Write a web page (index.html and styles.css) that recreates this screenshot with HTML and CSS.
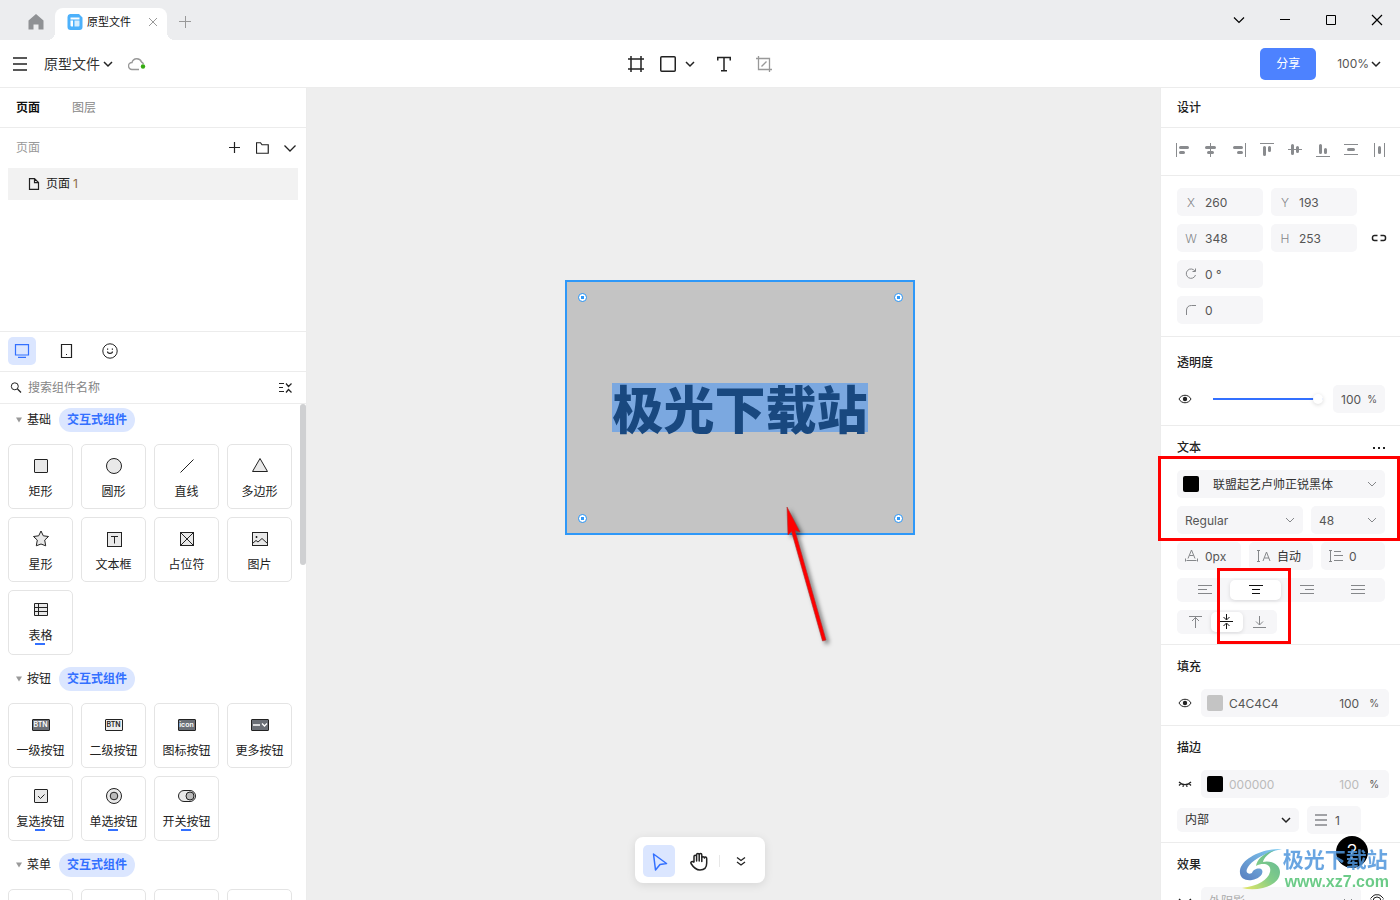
FILE: index.html
```html
<!DOCTYPE html>
<html lang="zh-CN">
<head>
<meta charset="utf-8">
<title>原型文件</title>
<link rel="stylesheet" href="styles.css">
</head>
<body>
<svg class="defs" aria-hidden="true">
  <symbol id="chev" viewBox="0 0 10 10"><path d="M1 3l4 4 4-4"/></symbol>
  <symbol id="tri" viewBox="0 0 8 6"><path d="M1 0.500h6L4 5.500z" fill="#999" stroke="none"/></symbol>
  <symbol id="eye" viewBox="0 0 14 10"><path d="M1 5c2.500-5 9.500-5 12 0-2.500 5-9.500 5-12 0z"/><circle cx="7" cy="5" r="2.200" fill="#222" stroke="none"/></symbol>
  <symbol id="closed" viewBox="0 0 14 10"><path d="M1 3c3 3.400 9 3.400 12 0M3 4.500L1 6.500M5.500 5.500L5 8M8.500 5.500L9 8M11 4.500L13 6.500" stroke-width="1.200"/></symbol>
</svg>
<div class="app">
  <header class="titlebar">
    <button class="home" aria-label="主页"><svg width="16" height="16" viewBox="0 0 16 16"><path d="M8 0l7.500 6.500V15.500h-5V10.500h-5v5h-5V6.500z" fill="#8f9194"/></svg></button>
    <div class="tab">
      <svg width="16" height="16" viewBox="0 0 16 16"><path d="M3 0h9l3.500 3.500V13a3 3 0 0 1-3 3H3.500a3 3 0 0 1-3-3V3A3 3 0 0 1 3 0z" fill="#4db1fb"/><path d="M3.500 3.500h9v2h-9z" fill="#fff"/><path d="M3.500 6.500h2.500v6H4.500a1 1 0 0 1-1-1z" fill="#fff"/><path d="M7.500 6.500h5v5a1 1 0 0 1-1 1h-4z" fill="#d5edff"/></svg>
      <span class="tab-name">原型文件</span>
      <button aria-label="关闭标签"><svg class="line pale" width="10" height="10" viewBox="0 0 10 10"><path d="M1 1l8 8M9 1L1 9"/></svg></button>
    </div>
    <button class="new-tab" aria-label="新建标签"><svg class="line pale" width="12" height="12" viewBox="0 0 12 12"><path d="M0 5.500h12M6.500 0v12"/></svg></button>
    <div class="window-buttons">
      <button aria-label="更多"><svg class="line" width="12" height="12" viewBox="0 0 12 12"><path d="M1 3.500l5 5 5-5" stroke-width="1.200"/></svg></button>
      <button aria-label="最小化"><svg class="line" width="12" height="12" viewBox="0 0 12 12"><path d="M1 5.500h10"/></svg></button>
      <button aria-label="最大化"><svg class="line" width="12" height="12" viewBox="0 0 12 12"><path d="M1.500 1.500h9v9h-9z"/></svg></button>
      <button aria-label="关闭"><svg class="line" width="12" height="12" viewBox="0 0 12 12"><path d="M1 1l10 10M11 1L1 11" stroke-width="1.200"/></svg></button>
    </div>
  </header>

  <div class="toolbar">
    <div class="bar-left">
      <button aria-label="菜单"><svg class="line thick" width="14" height="14" viewBox="0 0 14 14"><path d="M0 1h14M0 7h14M0 13h14"/></svg></button>
      <button class="file-name">原型文件<svg class="line thick" width="10" height="10"><use href="#chev"/></svg></button>
      <svg class="line cloud" width="18" height="14" viewBox="0 0 18 14"><path d="M11 12.500H4a3.500 3.500 0 0 1 0-7 5 5 0 0 1 9.500-.5 4 4 0 0 1 2 2" stroke="#999" stroke-width="1.400"/><circle cx="15" cy="9.500" r="2.200" fill="#36ab12" stroke="none"/></svg>
    </div>
    <div class="bar-mid">
      <button aria-label="画板"><svg class="line thick" width="16" height="16" viewBox="0 0 16 16"><path d="M0 3h16M0 13h16M3 0v16M13 0v16"/></svg></button>
      <button class="shape" aria-label="矩形"><svg class="line thick" width="16" height="16" viewBox="0 0 16 16"><rect x="0.750" y="0.750" width="14.500" height="14.500" rx="1"/></svg><svg class="line thick" width="10" height="10"><use href="#chev"/></svg></button>
      <button class="tool-t" aria-label="文本"><svg class="line thick" width="14" height="16" viewBox="0 0 14 16"><path d="M0.750 4.500V1.500h12.500v3M7 1.500v13M4 14.750h6"/></svg></button>
      <button class="tool-crop" aria-label="裁剪"><svg class="line pale" width="16" height="16" viewBox="0 0 16 16"><path d="M0 2.500h13.500V16M2.500 0v13.500H16M5.500 10.500l5-5" stroke-width="1.300"/></svg></button>
    </div>
    <div class="bar-right">
      <button class="share">分享</button>
      <button class="zoom">100%<svg class="line thick" width="10" height="10"><use href="#chev"/></svg></button>
    </div>
  </div>

  <div class="workspace">
    <aside class="left">
      <nav class="panel-tabs"><button class="on">页面</button><button>图层</button></nav>
      <section class="pages">
        <div class="pages-head">
          <span>页面</span>
          <button aria-label="添加页面"><svg class="line" width="12" height="12" viewBox="0 0 12 12"><path d="M0 5.500h11M5.500 0v11" stroke-width="1.200"/></svg></button>
          <button aria-label="添加文件夹"><svg class="line" width="13" height="12" viewBox="0 0 13 12"><path d="M0.500 0.750h4l1.500 2h6.250v8.500H0.500z" stroke-width="1.200"/></svg></button>
          <button aria-label="收起"><svg class="line" width="12" height="12" viewBox="0 0 12 12"><path d="M0.500 3.500l5.500 5.500 5.500-5.500" stroke-width="1.300"/></svg></button>
        </div>
        <button class="page-row"><svg class="line" width="12" height="12" viewBox="0 0 12 12"><path d="M1.500 0.600h5l4 4v6.800h-9zM6.500 0.600v4h4" stroke-width="1.200"/></svg>页面 <i>1</i></button>
      </section>
      <div class="kinds">
        <button class="on" aria-label="桌面"><svg class="line" width="16" height="14" viewBox="0 0 16 14"><path d="M1.500 0.600h13v10.400h-13zM4 13.400h8" stroke-width="1.200"/></svg></button>
        <button aria-label="移动"><svg class="line" width="14" height="16" viewBox="0 0 14 16"><path d="M2.500 1.500h10v13h-10z" stroke-width="1.200"/><path d="M7 11.500h1" stroke-width="1.200"/></svg></button>
        <button aria-label="图标"><svg class="line" width="16" height="16" viewBox="0 0 16 16"><circle cx="8" cy="8" r="7.200"/><path d="M5.500 8.500c0 2.500 5 2.500 5 0M5 6.200h1.200M9.800 6.200H11" stroke-width="1.200"/></svg></button>
      </div>
      <label class="search">
        <svg class="line" width="12" height="12" viewBox="0 0 12 12"><circle cx="4.800" cy="4.300" r="3.500"/><path d="M7.500 7l3.500 3.500" stroke-width="1.300"/></svg>
        <input type="text" placeholder="搜索组件名称" aria-label="搜索组件名称">
        <svg class="line" width="14" height="12" viewBox="0 0 14 12"><path d="M1 1.500h5M1 5.500h4M1 9.500h5M8 1.500l2.500 3 3-3M8 10.500l2.500-3 3 3" stroke-width="1.200"/></svg>
      </label>
      <div class="library">
        <section class="group">
          <h3><svg width="8" height="6"><use href="#tri"/></svg>基础<em>交互式组件</em></h3>
          <div class="cards">
            <button><svg class="ico" viewBox="0 0 20 20"><rect x="3.500" y="3.500" width="13" height="13" rx="0.500"/></svg>矩形</button>
            <button><svg class="ico" viewBox="0 0 20 20"><circle cx="10" cy="10" r="7.500"/></svg>圆形</button>
            <button><svg class="ico" viewBox="0 0 20 20"><path d="M3.500 16.500l13-13"/></svg>直线</button>
            <button><svg class="ico" viewBox="0 0 20 20"><path d="M10 2.500l7.500 13h-15z"/></svg>多边形</button>
            <button><svg class="ico" viewBox="0 0 20 20"><path d="M10 2l2.300 4.800 5.200.7-3.800 3.600 1 5.700-4.700-1.800-4.700 1.800 1-5.700L2.500 7.500l5.200-.7z"/></svg>星形</button>
            <button><svg class="ico" viewBox="0 0 20 20"><rect x="3.500" y="3.500" width="14" height="14"/><path d="M7 7.500h7M10.500 7.500v7"/></svg>文本框</button>
            <button><svg class="ico" viewBox="0 0 20 20"><rect x="3.500" y="3.500" width="13" height="13"/><path d="M3.500 3.500l13 13M16.500 3.500l-13 13"/></svg>占位符</button>
            <button><svg class="ico" viewBox="0 0 20 20"><rect x="2.500" y="3.500" width="15" height="13"/><path d="M3 14l3-2.500L8 13l4-3.500 5.500 5M6 7.500h1v1H6z"/></svg>图片</button>
            <button class="live"><svg class="ico" viewBox="0 0 20 20"><path d="M3.500 3.500h13v12h-13zM3.500 7.500h13M3.500 11.500h13M7.500 3.500v12"/></svg><span>表格</span></button>
          </div>
        </section>
        <section class="group">
          <h3><svg width="8" height="6"><use href="#tri"/></svg>按钮<em>交互式组件</em></h3>
          <div class="cards">
            <button><b class="chip dark">BTN</b>一级按钮</button>
            <button><b class="chip">BTN</b>二级按钮</button>
            <button><b class="chip dark">icon</b>图标按钮</button>
            <button><b class="chip dark"><svg width="16" height="8" viewBox="0 0 16 8"><path d="M1 4h7M10 2.500l2.500 2.500L15 2.500" fill="none" stroke="#fff" stroke-width="1.300"/></svg></b>更多按钮</button>
            <button class="live"><svg class="ico" viewBox="0 0 20 20"><rect x="3.500" y="3.500" width="13" height="13" rx="0.500"/><path class="open" d="M7 10l2.500 2.500 4-4"/></svg><span>复选按钮</span></button>
            <button class="live"><svg class="ico" viewBox="0 0 20 20"><circle cx="10" cy="10" r="7.500"/><circle cx="10" cy="10" r="3.800" fill="#bbb"/></svg><span>单选按钮</span></button>
            <button class="live"><svg class="ico" viewBox="0 0 20 20"><rect x="1.500" y="4.500" width="17" height="11" rx="5.500"/><circle cx="13" cy="10" r="4" fill="#bbb"/></svg><span>开关按钮</span></button>
          </div>
        </section>
        <section class="group">
          <h3><svg width="8" height="6"><use href="#tri"/></svg>菜单<em>交互式组件</em></h3>
          <div class="cards"><button aria-label="菜单一"></button><button aria-label="菜单二"></button><button aria-label="菜单三"></button><button aria-label="菜单四"></button></div>
        </section>
        <div class="scrollbar"></div>
      </div>
    </aside>

    <main class="canvas">
      <div class="artboard">
        <p>极光下载站</p>
        <i class="dot tl"></i><i class="dot tr"></i><i class="dot bl"></i><i class="dot br"></i>
      </div>
      <svg class="arrow" width="60" height="160" viewBox="0 0 60 160"><path d="M7 12l13 25-5-1.500L46 145l-3.500 1L11.500 36.500 8 40z" fill="#fe0000" stroke="#a33" stroke-width="0.600"/></svg>
    </main>

    <aside class="right">
      <h2 class="design">设计</h2>
      <div class="aligns">
        <button aria-label="左对齐"><svg viewBox="0 0 14 14"><path class="t" d="M0.500 0v14"/><path d="M4.500 4.500h7M4.500 9.500h3"/></svg></button>
        <button aria-label="水平居中"><svg viewBox="0 0 14 14"><path class="t" d="M6.500 0v14"/><path d="M2.500 4.500h8M4.500 9.500h4"/></svg></button>
        <button aria-label="右对齐"><svg viewBox="0 0 14 14"><path class="t" d="M13.500 0v14"/><path d="M2.500 4.500h7M6.500 9.500h3"/></svg></button>
        <button aria-label="顶对齐"><svg viewBox="0 0 14 14"><path class="t" d="M0 0.500h14"/><path d="M4.500 4.500v7M9.500 4.500v3"/></svg></button>
        <button aria-label="垂直居中"><svg viewBox="0 0 14 14"><path class="t" d="M0 6.500h14"/><path d="M4.500 2.500v8M9.500 4.500v4"/></svg></button>
        <button aria-label="底对齐"><svg viewBox="0 0 14 14"><path class="t" d="M0 13.500h14"/><path d="M4.500 2.500v7M9.500 6.500v3"/></svg></button>
        <button aria-label="垂直分布"><svg viewBox="0 0 14 14"><path class="t" d="M0 1.500h14M0 11.500h14"/><path d="M4.500 6.500h5"/></svg></button>
        <button aria-label="水平分布"><svg viewBox="0 0 14 14"><path class="t" d="M2.500 0v14M12.500 0v14"/><path d="M7.500 4.500v5"/></svg></button>
      </div>
      <section class="geometry">
        <label class="field"><span>X</span><input type="text" value="260"></label>
        <label class="field"><span>Y</span><input type="text" value="193"></label><span></span>
        <label class="field"><span>W</span><input type="text" value="348"></label>
        <label class="field"><span>H</span><input type="text" value="253"></label>
        <button aria-label="锁定比例"><svg class="line" width="16" height="10" viewBox="0 0 16 10"><path d="M6.500 2.500h-3a2 2 0 0 0-2 2v1a2 2 0 0 0 2 2h3M9.500 2.500h3a2 2 0 0 1 2 2v1a2 2 0 0 1-2 2h-3" stroke-width="1.500"/></svg></button>
        <label class="field"><svg class="line gray" width="12" height="12" viewBox="0 0 12 12"><path d="M10 3.200A4.700 4.700 0 1 0 10.500 7M10.500 0.500v3H7.500"/></svg><input type="text" value="0 °" aria-label="旋转"></label><span></span><span></span>
        <label class="field"><svg class="line gray" width="12" height="12" viewBox="0 0 12 12"><path d="M1.500 11V6a5 5 0 0 1 5-4.500H11"/></svg><input type="text" value="0" aria-label="圆角"></label>
      </section>
      <section class="opacity">
        <h2>透明度</h2>
        <div class="row">
          <button class="eye" aria-label="显示"><svg class="line" width="14" height="10"><use href="#eye"/></svg></button>
          <input class="slider" type="range" value="100" aria-label="透明度">
          <label class="field percent"><input type="text" value="100" aria-label="透明度数值"><b>%</b></label>
        </div>
      </section>
      <section class="text">
        <h2>文本<button aria-label="更多文本选项"><svg width="14" height="4" viewBox="0 0 14 4"><path d="M1 1h2v2H1zM6 1h2v2H6zM11 1h2v2h-2z" fill="#222"/></svg></button></h2>
        <div class="field picker"><i class="swatch black"></i><select aria-label="字体"><option>联盟起艺卢帅正锐黑体</option></select><svg class="line gray" width="10" height="10"><use href="#chev"/></svg></div>
        <div class="row">
          <div class="field picker weight"><select aria-label="字重"><option>Regular</option></select><svg class="line gray" width="10" height="10"><use href="#chev"/></svg></div>
          <div class="field picker size"><select aria-label="字号"><option>48</option></select><svg class="line gray" width="10" height="10"><use href="#chev"/></svg></div>
        </div>
        <div class="thirds">
          <label class="field"><svg class="line gray" width="14" height="14" viewBox="0 0 14 14"><path d="M3 9.500l3.500-8.500 3.500 8.500M4.500 6.500h4M1.500 11.500h10M0.500 9.500v3M12.500 9.500v3"/></svg><input type="text" value="0px" aria-label="字间距"></label>
          <label class="field"><svg class="line gray" width="14" height="14" viewBox="0 0 14 14"><path d="M0 1.500h3M1.500 1.500v11M0 12.500h3M6 12l3.500-9L13 12M7.500 9h4.500"/></svg><input type="text" value="自动" aria-label="行高"></label>
          <label class="field"><svg class="line gray" width="14" height="14" viewBox="0 0 14 14"><path d="M0 1.500h3M1.500 1.500v11M0 12.500h3M5 2.500h7M5 6.500h9M5 11.500h9"/></svg><input type="text" value="0" aria-label="段间距"></label>
        </div>
        <div class="segments">
          <button aria-label="文本左对齐"><svg viewBox="0 0 14 12"><path d="M0 1.500h14M0 5.500h9M0 9.500h14"/></svg></button>
          <button class="on" aria-label="文本居中"><svg viewBox="0 0 14 12"><path d="M0 1.500h14M3 5.500h8M3 9.500h8"/></svg></button>
          <button aria-label="文本右对齐"><svg viewBox="0 0 14 12"><path d="M0 1.500h14M5 5.500h9M0 9.500h14"/></svg></button>
          <button aria-label="两端对齐"><svg viewBox="0 0 14 12"><path d="M0 1.500h14M0 5.500h14M0 9.500h14"/></svg></button>
        </div>
        <div class="segments short">
          <button aria-label="文本顶部"><svg class="v" viewBox="0 0 14 16"><path d="M1 2.500h13M7.500 3v11M4 7l3.500-3.500L11 7"/></svg></button>
          <button class="on" aria-label="文本垂直居中"><svg class="v" viewBox="0 0 14 16"><path d="M0 7.500h13M6.500 0v5.500M3.500 3l3 3 3-3M6.500 15V9.500M3.500 12l3-3 3 3"/></svg></button>
          <button aria-label="文本底部"><svg class="v" viewBox="0 0 14 16"><path d="M1 13.500h13M7.500 2v9M4 7.500l3.500 3.500L11 7.500"/></svg></button>
        </div>
        <div class="mark mark-font"></div>
        <div class="mark mark-align"></div>
      </section>
      <section>
        <h2>填充</h2>
        <div class="row paint">
          <button class="eye" aria-label="显示填充"><svg class="line" width="14" height="10"><use href="#eye"/></svg></button>
          <div class="field color"><i class="swatch gray"></i><input class="hex" type="text" value="C4C4C4" aria-label="填充颜色"><input class="alpha" type="text" value="100" aria-label="填充透明度"><b>%</b></div>
        </div>
      </section>
      <section>
        <h2>描边</h2>
        <div class="row paint">
          <button class="eye" aria-label="显示描边"><svg class="line" width="14" height="10"><use href="#closed"/></svg></button>
          <div class="field color off"><i class="swatch black"></i><input class="hex" type="text" value="000000" aria-label="描边颜色"><input class="alpha" type="text" value="100" aria-label="描边透明度"><b>%</b></div>
        </div>
        <div class="row">
          <div class="field picker inside"><select aria-label="描边位置"><option>内部</option></select><svg class="line thick" width="10" height="10"><use href="#chev"/></svg></div>
          <label class="field stroke-width"><svg class="line gray" width="12" height="12" viewBox="0 0 12 12"><path d="M0 1h12M0 6h12M0 11h12" stroke-width="1.500"/></svg><input type="text" value="1" aria-label="描边宽度"></label>
        </div>
      </section>
      <section class="effects">
        <h2>效果</h2>
        <div class="row paint">
          <button class="eye" aria-label="显示效果"><svg class="line" width="14" height="10"><use href="#closed"/></svg></button>
          <div class="field picker shadow"><select aria-label="效果类型"><option>外阴影</option></select><svg class="line gray" width="10" height="10"><use href="#chev"/></svg></div>
          <button aria-label="效果设置"><svg class="line" width="14" height="14" viewBox="0 0 14 14"><circle cx="7" cy="7" r="4"/><path d="M3 2l2-1.200h4L11 2M0.500 4.500L3 2M13.500 4.500L11 2M1 5.500v3L3 12h8l2-3.500v-3"/></svg></button>
        </div>
      </section>
    </aside>
  </div>
</div>

<div class="dock">
  <button class="on" aria-label="选择"><svg class="line" width="18" height="20" viewBox="0 0 18 20"><path d="M3.500 3l13 9.500-6.500 1-4.500 5.500z" stroke-width="1.500" stroke-linejoin="round"/></svg></button>
  <button aria-label="抓手"><svg class="line" width="20" height="20" viewBox="0 0 20 20"><path d="M6 11.500V5.500a1.300 1.300 0 0 1 2.600 0V10 3.700a1.300 1.300 0 0 1 2.600 0V10 3.900a1.300 1.300 0 0 1 2.600 0V10.500 5.700M13.800 7a1.300 1.300 0 0 1 2.600 0c.3-1.400 2.300-1.200 2.300.5V12c0 4.500-2.800 7-6.700 7-4 0-6.500-2.500-9-6.500-.8-1.700 1.500-2.700 3-1" stroke-width="1.500" stroke-linejoin="round"/></svg></button>
  <span></span>
  <button aria-label="展开"><svg class="line" width="12" height="12" viewBox="0 0 12 12"><path d="M2 2.500l4 3 4-3M2 7l4 3 4-3" stroke-width="1.300"/></svg></button>
</div>
<button class="help" aria-label="帮助">?</button>
<div class="watermark">
  <svg width="44" height="42" viewBox="0 0 44 42">
    <defs>
      <linearGradient id="wa" x1="0" y1="1" x2="1" y2="0"><stop offset="0" stop-color="#3c68b4"/><stop offset="1" stop-color="#6fc8f3"/></linearGradient>
      <linearGradient id="wb" x1="0" y1="1" x2="1" y2="0"><stop offset="0" stop-color="#e9e64a"/><stop offset="0.500" stop-color="#6cc474"/><stop offset="1" stop-color="#43a985"/></linearGradient>
    </defs>
    <path d="M43 1C25 0 3 10 1 22c-1 8 5 11 12 10 7-1 12-6 10-10-2-3-9-1-10 3-5 2-7-1-4-6C14 11 28 4 43 1z" fill="url(#wa)"/>
    <path d="M36 2C25 5 18 11 17 18c7-4 16-2 14 6-2 8-12 14-28 16 16 4 38-2 38-16 0-8-10-12-17-10 1-5 6-9 12-12z" fill="url(#wb)"/>
  </svg>
  <div><strong>极光下载站</strong><small>www.xz7.com</small></div>
</div>
</body>
</html>
```
FILE: styles.css
```css
* { box-sizing: border-box; }
body {
  margin: 0;
  overflow: hidden;
  color: #222;
  font: 12px/18px Inter, "Noto Sans CJK SC", sans-serif;
}
button, input, select { font: inherit; color: inherit; margin: 0; padding: 0; border: 0; background: none; min-width: 0; outline: 0; }
button { display: flex; align-items: center; justify-content: center; }
h2, h3, p { margin: 0; font-size: 12px; }
i, em { font-style: normal; }
svg { flex: none; display: block; }
select { appearance: none; flex: 1; }
.defs { position: absolute; width: 0; height: 0; }
.line { fill: none; stroke: #222; stroke-width: 1; }
.thick { stroke-width: 1.5; }
.pale { stroke: #999; }
.gray { stroke: #85878a; }

.app { height: 100vh; display: flex; flex-direction: column; }
.titlebar { height: 40px; flex: none; display: flex; background: #ecedef; }
.home { width: 72px; padding-top: 4px; margin-right: -17px; }
.tab { position: relative; width: 112px; margin-top: 8px; padding: 0 9px 4px 12px; display: flex; align-items: center; background: #fff; border-radius: 8px 8px 0 0; }
.tab::before, .tab::after { content: ""; position: absolute; bottom: 0; width: 8px; height: 8px; }
.tab::before { right: 100%; background: radial-gradient(circle at 0 0, #ecedef 8px, #fff 8px); }
.tab::after { left: 100%; background: radial-gradient(circle at 100% 0, #ecedef 8px, #fff 8px); }
.tab-name { flex: 1; margin-left: 4px; font-size: 11px; color: #111; }
.new-tab { width: 36px; padding-top: 4px; }
.window-buttons { margin-left: auto; display: flex; }
.window-buttons button { width: 46px; }
.window-buttons .line { stroke: #000; }

.toolbar { height: 48px; flex: none; display: grid; grid-template-columns: 1fr auto 1fr; align-items: center; border-bottom: 1px solid #ececec; background: #fff; }
.bar-left, .bar-mid, .bar-right { display: flex; align-items: center; }
.bar-left { padding-left: 13px; }
.file-name { margin: 0 15px 0 17px; gap: 3px; font-size: 14px; color: #333; }
.shape { margin: 0 22px 0 16px; gap: 9px; }
.tool-crop { margin-left: 25px; }
.bar-right { justify-content: flex-end; padding-right: 20px; gap: 21px; }
.share { width: 56px; height: 32px; border-radius: 5px; color: #fff; background: #4d82ff; }
.zoom { gap: 2px; margin-right: -1px; color: #555; }

.workspace { flex: 1; min-height: 0; display: flex; }
.left { width: 307px; flex: none; display: flex; flex-direction: column; border-right: 1px solid #ececec; background: #fff; }
.panel-tabs { height: 40px; display: flex; gap: 32px; padding-left: 16px; border-bottom: 1px solid #ececec; color: #888; }
.panel-tabs .on { color: #111; font-weight: 700; }
.pages { height: 204px; border-bottom: 1px solid #ececec; }
.pages-head { height: 40px; display: flex; align-items: center; gap: 15px; padding: 0 10px 0 16px; color: #999; }
.pages-head span { flex: 1; }
.page-row { width: calc(100% - 16px); height: 32px; margin: 0 8px; padding-left: 20px; gap: 6px; justify-content: flex-start; background: #f2f2f2; }
.page-row i { margin-left: -3px; color: #8a6a48; }
.kinds { height: 40px; display: flex; align-items: center; gap: 16px; padding: 0 8px 2px; border-bottom: 1px solid #ececec; }
.kinds button { width: 28px; height: 28px; border-radius: 5px; }
.kinds .on { background: #dbe6ff; }
.kinds .on .line { stroke: #3370ff; }
.search { height: 32px; display: flex; align-items: center; gap: 6px; padding: 0 14px 0 10px; border-bottom: 1px solid #ececec; }
.search input { flex: 1; }
.search input::placeholder { color: #858585; opacity: 1; }
.library { position: relative; flex: 1; min-height: 0; overflow: hidden; padding: 4px 14px 0 8px; }
.group { margin-bottom: 12px; }
.group h3 { height: 24px; display: flex; align-items: center; padding-left: 7px; gap: 4px; font-weight: 400; }
.group em { margin-left: 4px; padding: 0 8px; line-height: 24px; border-radius: 12px; color: #3370ff; background: #dbe6ff; font-weight: 700; }
.cards { display: grid; grid-template-columns: repeat(4, 65px); gap: 8px; margin-top: 12px; }
.cards button { height: 65px; padding-top: 11px; flex-direction: column; justify-content: flex-start; gap: 7px; border: 1px solid #e4e4e4; border-radius: 5px; white-space: nowrap; }
.cards .live { padding-top: 9px; }
.live span { position: relative; }
.live span::after { content: ""; position: absolute; left: calc(50% - 5px); bottom: 0; width: 10px; height: 2px; background: #3370ff; }
.ico { width: 20px; height: 20px; fill: #e9e9e9; stroke: #222; stroke-width: 1; }
.ico .open { fill: none; }
.chip { width: 18px; height: 12px; margin: 4px 0; display: flex; align-items: center; justify-content: center; border: 1px solid #222; border-radius: 1px; background: #eee; color: #222; font: 600 7px/12px Inter, sans-serif; }
.chip.dark { background: #6b6f76; color: #fff; }
.scrollbar { position: absolute; top: 0; right: 0; width: 6px; height: 161px; border-radius: 3px; background: #cfd0d2; }

.canvas { position: relative; flex: 1; min-width: 0; overflow: hidden; background: #eee; }
.artboard { position: absolute; left: 258px; top: 192px; width: 350px; height: 255px; display: flex; align-items: center; justify-content: center; border: 2px solid #2e98f8; background: #c4c4c4; }
.artboard p { color: #19487f; background: #7ba8e0; font: 900 51px/49px "Noto Sans CJK SC", sans-serif; }
.dot { position: absolute; width: 9px; height: 9px; border: 1px solid #2e98f8; border-radius: 50%; background: radial-gradient(circle, #2e98f8 1.5px, #fff 2px); }
.tl, .tr { top: 11px; }
.bl, .br { bottom: 10px; }
.tl, .bl { left: 11px; }
.tr, .br { right: 10px; }
.arrow { position: absolute; left: 473px; top: 407px; filter: drop-shadow(3px 3px 2px rgba(0, 0, 0, .5)); }

.right { width: 240px; flex: none; border-left: 1px solid #ececec; background: #fff; }
.right section { position: relative; padding: 9px 16px 8px; border-bottom: 1px solid #ececec; }
.right h2 { height: 24px; margin-bottom: 11px; padding-top: 2px; display: flex; align-items: center; justify-content: space-between; font-weight: 500; }
.right .design { height: 40px; margin: 0; padding: 0 0 0 16px; border-bottom: 1px solid #ececec; }
.aligns { height: 48px; display: flex; align-items: center; justify-content: space-between; padding: 0 14px 4px 15px; border-bottom: 1px solid #ececec; }
.aligns svg { width: 14px; height: 14px; fill: none; stroke: #898b8e; stroke-width: 3; stroke-linecap: round; }
.aligns .t { stroke-width: 1; stroke-linecap: butt; }
.right .geometry { display: grid; grid-template-columns: 86px 86px 1fr; gap: 8px; padding: 12px 12px 12px 16px; }
.geometry button { width: 16px; margin-left: auto; margin-right: 1px; }
.field { height: 28px; display: flex; align-items: center; gap: 8px; padding: 0 8px; border-radius: 5px; background: #f6f6f8; color: #555; }
.field input { width: 0; flex: 1; }
.field input, .field select, .field > span { padding-top: 2px; }
.field > span { width: 12px; text-align: center; color: #85878a; font-weight: 300; }
.field b { font-size: 10px; font-weight: 400; }
.row { display: flex; align-items: center; gap: 8px; }
.eye { width: 16px; height: 28px; flex: none; }
.right .opacity { padding-top: 13px; padding-bottom: 12px; }
.slider { appearance: none; flex: 1; height: 12px; margin-left: 12px; margin-right: 2px; }
.slider::-webkit-slider-runnable-track { height: 2px; background: #3370ff; }
.slider::-webkit-slider-thumb { appearance: none; width: 10px; height: 10px; margin-top: -4px; border-radius: 50%; background: #fff; box-shadow: 0 1px 4px rgba(0, 0, 0, .15); }
.percent { width: 52px; flex: none; gap: 0; }
.opacity .row, .text .row, .text > .picker, .thirds, .segments { margin-right: -1px; }
.swatch { width: 16px; height: 16px; border-radius: 2px; }
.swatch.black { background: #000; }
.swatch.gray { background: #c4c4c4; }
.right .text { padding-bottom: 10px; }
.text .picker .swatch { margin: 0 6px 0 -2px; }
.text > .picker, .text .row, .thirds, .segments { margin-bottom: 8px; }
.text > .picker { color: #333; }
.weight { width: 126px; }
.size { flex: 1; }
.text h2 button { margin-right: -2px; }
.thirds { display: grid; grid-template-columns: 1fr 1fr 1fr; gap: 8px; }
.thirds .field { gap: 6px; }
.thirds .field:nth-child(2) { color: #333; }
.segments { height: 24px; display: flex; padding: 2px; border-radius: 5px; background: #f6f6f8; }
.segments button { flex: 1; border-radius: 5px; }
.segments svg { width: 14px; height: 12px; fill: none; stroke: #85878a; }
.segments .v { height: 16px; }
.segments .on { background: #fff; box-shadow: 0 1px 4px rgba(0, 0, 0, .12); }
.segments .on svg { stroke: #111; }
.right .short { width: 100px; margin-bottom: 0; }
.mark { position: absolute; border: 3px solid #f00; pointer-events: none; }
.mark-font { left: -3px; right: 0; top: 30px; height: 85px; }
.mark-align { left: 56px; top: 142px; width: 74px; height: 76px; }
.paint { margin-right: -5px; }
.color { flex: 1; padding: 0 10px 0 6px; gap: 6px; }
.color .hex { flex: 1; }
.color .alpha { width: 22px; flex: none; }
.color b { margin-left: 2px; }
.color.off input { color: #bbb; }
.right .row + .row { margin-top: 8px; }
.right .text .row { margin-top: 0; }
.inside { width: 122px; height: 24px; color: #333; }
.inside select { padding-top: 0; }
.stroke-width { width: 54px; }
.right .effects { border: 0; }
.shadow { flex: 1; color: #aaa; }
.effects .paint button:last-child { width: 16px; margin-right: 4px; }

.dock { position: absolute; left: 50%; bottom: 17px; transform: translateX(-50%); width: 130px; height: 46px; display: flex; align-items: center; padding: 2px 8px 0; border-radius: 8px; background: #fff; box-shadow: 0 2px 10px rgba(0, 0, 0, .1); }
.dock button { width: 32px; height: 32px; border-radius: 5px; }
.dock .on { background: #dbe6ff; }
.dock .on .line { stroke: #3370ff; }
.dock button:nth-child(2) { margin-left: 7px; }
.dock span { width: 1px; height: 12px; margin: 0 5px; background: #e8e8e8; }
.help { position: absolute; right: 32px; bottom: 32px; width: 32px; height: 32px; border-radius: 50%; background: #000; color: #fff; font-size: 20px; font-weight: 300; }
.watermark { position: absolute; right: 11px; bottom: 8px; display: flex; opacity: .85; }
.watermark div { display: flex; flex-direction: column; }
.watermark strong { font-size: 21px; font-weight: 700; color: #4f96dc; line-height: 24px; }
.watermark small { font: 700 16px/20px "Liberation Sans", sans-serif; color: #53c274; margin-left: 2px; }
```
